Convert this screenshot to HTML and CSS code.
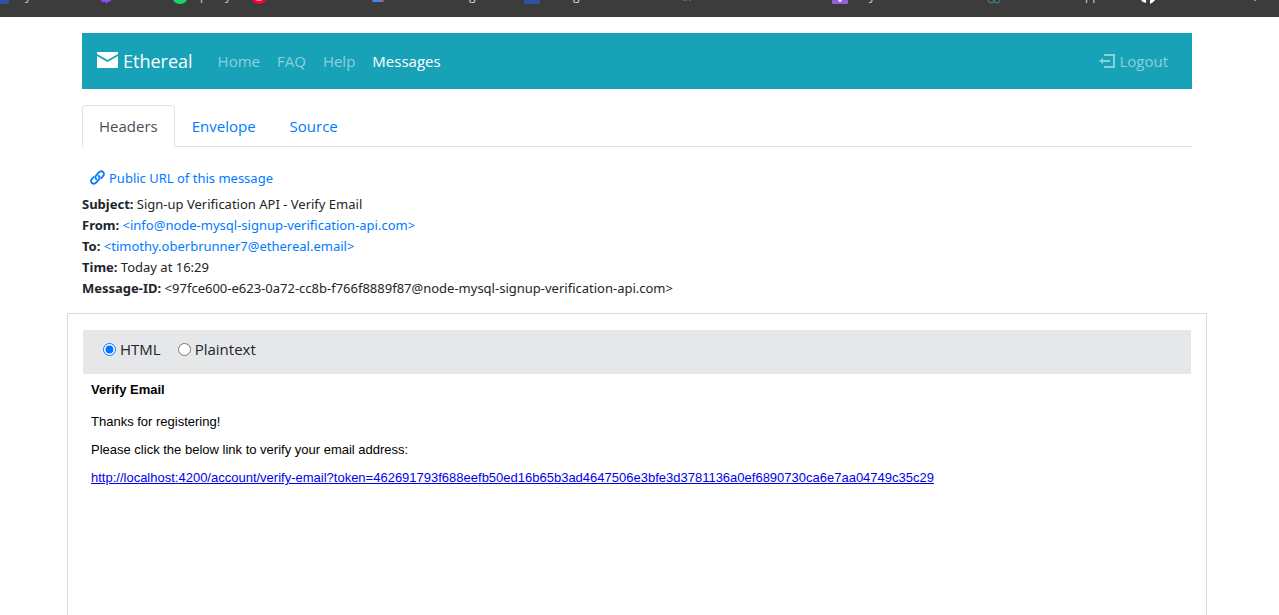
FILE: index.html
```html
<!DOCTYPE html>
<html lang="en">
<head>
<meta charset="utf-8">
<title>Ethereal</title>
<link rel="stylesheet" href="styles.css">
</head>
<body>
<div class="bookmarks">
  <svg class="bookmarks-art" width="1279" height="16" aria-hidden="true">
    <rect x="-6" y="-8" width="15" height="12" fill="#2f51a3"/>
    <path d="M101 0h10v1l-3 1-2 2v-2h-4z" fill="#9147ff"/>
    <circle cx="180" cy="-4" r="8" fill="#1ed760"/>
    <circle cx="259" cy="-4" r="8" fill="#ff0033"/>
    <path d="M256 0h6l-1 1h-4z" fill="#ff9aaa"/>
    <path d="M372 0h12l-1 2h-10z" fill="#4285f4"/>
    <path d="M382 0h2l-1 2h-1z" fill="#ea4335"/>
    <rect x="524" y="-10" width="16" height="14" rx="2" fill="#2f51a3"/>
    <path d="M682 0h5v1h-3zM689 0h2v1h-2z" fill="#5060a8"/>
    <rect x="832" y="-10" width="16" height="14" rx="1" fill="#8f63d2"/>
    <path d="M838 0h4l-1 2h-2z" fill="#e4d8fa"/>
    <g fill="none" stroke="#3d8b9b" stroke-width="1"><circle cx="991" cy="0" r="3"/><circle cx="997" cy="0" r="3"/></g>
    <path d="M1141 0h5v3q-3 0-5-3zM1150 0h5q-1 2-5 4z" fill="#fff"/>
    <path d="M1254 0h2v1h-2z" fill="#8399aa"/>
    <text x="25" y="0">y</text>
    <text x="200" y="0">p</text>
    <text x="225" y="0">y</text>
    <text x="469" y="0">g</text>
    <text x="573" y="0">g</text>
    <text x="869" y="0">y</text>
    <text x="1085" y="0">pp</text>
  </svg>
</div>
<div class="container">
  <nav class="navbar">
    <a class="brand" href="#">
      <svg width="21" height="18" viewBox="0 0 21 18" aria-hidden="true"><path d="M0 0h21v2L10.500 8 0 2z M0 4l10.500 6L21 4v12H0z" fill="#fff"/></svg>
      Ethereal</a>
    <a class="nav-link" href="#">Home</a>
    <a class="nav-link" href="#">FAQ</a>
    <a class="nav-link" href="#">Help</a>
    <a class="nav-link current" href="#">Messages</a>
    <a class="nav-link logout" href="#">
      <svg width="16" height="14" viewBox="0 0 16 14" aria-hidden="true"><path d="M5 0h11v14H5v-2h9V2H5z M0 7l4-3v2h7v2H4v2z" fill="currentColor"/></svg>
      Logout</a>
  </nav>
  <div class="tabs">
    <a class="tab active" href="#">Headers</a>
    <a class="tab" href="#">Envelope</a>
    <a class="tab" href="#">Source</a>
  </div>
  <div class="headers">
    <a class="public" href="#">
      <svg width="15" height="17" viewBox="0 0 15 17" aria-hidden="true"><g fill="none" stroke="currentColor" stroke-width="1.800" stroke-linecap="round"><path d="M6.400 9.200C5 8 5 6.600 6.200 5.300L8.600 2.700C10 1.200 11.600 .8 13 2s1.200 2.800 0 4.200L11.400 8"/><path d="M8.600 5.800c1.400 1.200 1.400 2.600.2 3.900L6.400 12.300C5 13.800 3.400 14.200 2 13s-1.200-2.800 0-4.200L3.600 7"/></g></svg>
      Public URL of this message</a>
    <div><b>Subject:</b> Sign-up Verification API - Verify Email</div>
    <div><b>From:</b> <a href="#">&lt;info@node-mysql-signup-verification-api.com&gt;</a></div>
    <div><b>To:</b> <a href="#">&lt;timothy.oberbrunner7@ethereal.email&gt;</a></div>
    <div><b>Time:</b> Today at 16:29</div>
    <div><b>Message-ID:</b> &lt;97fce600-e623-0a72-cc8b-f766f8889f87@node-mysql-signup-verification-api.com&gt;</div>
  </div>
</div>
<main class="panel">
  <div class="formats">
    <label><input type="radio" name="format" checked>HTML</label>
    <label><input type="radio" name="format">Plaintext</label>
  </div>
  <article class="mail">
    <h4>Verify Email</h4>
    <p>Thanks for registering!</p>
    <p>Please click the below link to verify your email address:</p>
    <p><a href="#">http://localhost:4200/account/verify-email?token=462691793f688eefb50ed16b65b3ad4647506e3bfe3d3781136a0ef6890730ca6e7aa04749c35c29</a></p>
  </article>
</main>
</body>
</html>
```
FILE: styles.css
```css
* { box-sizing: border-box; }
body {
  margin: 0;
  min-height: 100vh;
  display: flex;
  flex-direction: column;
  background: #fff;
  color: #212529;
  font: 15px/24px "Open Sans", "Noto Sans", sans-serif;
}
a { color: #007bff; text-decoration: none; }
.bookmarks { height: 17px; background: #3c3c3c; overflow: hidden; }
.bookmarks-art { display: block; font-size: 12px; fill: #d8d8d8; }
.container, .panel {
  width: calc(100% - 5px);
  max-width: 1140px;
  align-self: center;
  margin-right: 5px;
}
.container { padding: 16px 15px 0; }
.navbar {
  display: flex;
  align-items: center;
  gap: 1px;
  height: 56px;
  padding: 0 16px 0 15px;
  background: #17a2b8;
}
.brand {
  display: flex;
  align-items: center;
  gap: 5px;
  margin-right: 16px;
  color: #fff;
  font-size: 18px;
}
.nav-link { padding: 8px; color: rgba(255, 255, 255, .5); }
.current { color: #fff; }
.logout { display: flex; align-items: center; gap: 4px; margin-left: auto; }
.tabs { display: flex; margin-top: 16px; border-bottom: 1px solid #dee2e6; }
.tab {
  margin-bottom: -1px;
  padding: 8px 16px;
  border: 1px solid transparent;
  border-radius: 4px 4px 0 0;
}
.active { color: #495057; background: #fff; border-color: #dee2e6 #dee2e6 #fff; }
.headers { padding-top: 16px; font: 13px/21px "Noto Sans", "Open Sans", sans-serif; }
.public { display: flex; align-items: center; gap: 4px; width: fit-content; padding: 5px 8px; }
.panel {
  flex: 1;
  margin-top: 14px;
  padding: 16px 15px 0;
  border: 1px solid #d9d9e3;
  border-bottom: 0;
}
.formats { display: flex; gap: 17px; height: 44px; padding: 7px 20px; background: #e6e7e9; }
.formats label { display: flex; align-items: center; gap: 4px; height: 24px; }
.formats input { width: 13px; height: 13px; margin: 0; accent-color: #0075ff; }
.mail { padding: 8px; color: #000; font: 13px/15px "Liberation Sans", Arial, sans-serif; }
.mail h4 { margin: 0 0 17px; font-size: 13px; }
.mail p { margin: 0 0 13px; }
.mail a { color: #00e; text-decoration: underline; }
```
